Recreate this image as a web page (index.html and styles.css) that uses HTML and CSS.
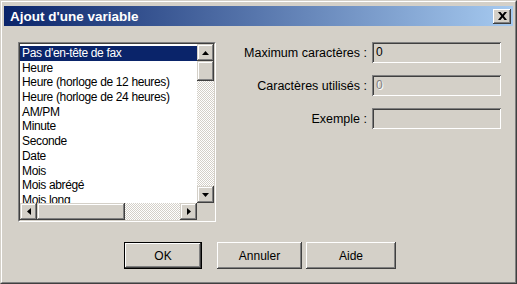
FILE: index.html
```html
<!DOCTYPE html>
<html lang="fr">
<head>
<meta charset="UTF-8">
<title>Ajout d'une variable</title>
<link rel="stylesheet" href="styles.css">
</head>
<body>

<div class="window">
  <div class="frame">

    <!-- Title bar -->
    <div class="titlebar">
      <span class="title">Ajout d'une variable</span>
      <button class="close-btn">
        <svg width="9" height="8" viewBox="0 0 9 8"><path d="M0 0h2.5L4.5 2.6 6.5 0H9L5.8 4 9 8H6.5L4.5 5.4 2.5 8H0l3.2-4z" fill="#000"/></svg>
      </button>
    </div>

    <div class="content">
      <div class="main">

        <!-- Variable list -->
        <div class="listbox">
          <div class="listbox-inner">
            <div class="list-row">
              <ul class="items">
                <li class="selected">Pas d'en-tête de fax</li>
                <li>Heure</li>
                <li>Heure (horloge de 12 heures)</li>
                <li>Heure (horloge de 24 heures)</li>
                <li>AM/PM</li>
                <li>Minute</li>
                <li>Seconde</li>
                <li>Date</li>
                <li>Mois</li>
                <li>Mois abrégé</li>
                <li>Mois long</li>
              </ul>
              <div class="vscroll">
                <div class="sb-btn"><svg width="7" height="4" viewBox="0 0 7 4"><path d="M3.5 0L7 4H0z"/></svg></div>
                <div class="sb-thumb-v"></div>
                <div class="sb-track"></div>
                <div class="sb-btn"><svg width="7" height="4" viewBox="0 0 7 4"><path d="M0 0h7L3.5 4z"/></svg></div>
              </div>
            </div>
            <div class="hscroll-row">
              <div class="hscroll">
                <div class="sb-btn"><svg width="4" height="7" viewBox="0 0 4 7"><path d="M0 3.5L4 0v7z"/></svg></div>
                <div class="sb-thumb-h"></div>
                <div class="sb-track"></div>
                <div class="sb-btn"><svg width="4" height="7" viewBox="0 0 4 7"><path d="M0 0l4 3.5L0 7z"/></svg></div>
              </div>
              <div class="corner"></div>
            </div>
          </div>
        </div>

        <!-- Fields -->
        <div class="fields">
          <label>Maximum caractères :</label>
          <div class="input">0</div>
          <label>Caractères utilisés :</label>
          <div class="input disabled">0</div>
          <label>Exemple :</label>
          <div class="input"></div>
        </div>
      </div>

      <!-- Dialog buttons -->
      <div class="buttons">
        <button class="btn btn-ok">OK</button>
        <button class="btn btn-cancel">Annuler</button>
        <button class="btn btn-help">Aide</button>
      </div>
    </div>

  </div>
</div>

</body>
</html>
```
FILE: styles.css
```css
body {
  margin: 0;
  background-color: #d4d0c8;
  font-family: "Liberation Sans", Arial, sans-serif;
  font-size: 12px;
}

/* Window frame */
.window {
  width: 517px;
  height: 284px;
  box-sizing: border-box;
  border: 1px solid;
  border-color: #d4d0c8 #404040 #404040 #d4d0c8;
}

.frame {
  height: 100%;
  box-sizing: border-box;
  border: 1px solid;
  border-color: #fff #808080 #808080 #fff;
  padding: 4px 2px 2px 2px;
  display: flex;
  flex-direction: column;
}

/* Title bar */
.titlebar {
  height: 20px;
  flex-shrink: 0;
  display: flex;
  align-items: center;
  justify-content: space-between;
  padding: 0 2px 0 6px;
  background: linear-gradient(to right, #0a246a, #a6caf0);
}

.title {
  color: #fff;
  font-weight: bold;
  font-size: 13.5px;
}

.close-btn {
  width: 18px;
  height: 15px;
  padding: 0;
  border: 0;
  background-color: #d4d0c8;
  display: flex;
  align-items: center;
  justify-content: center;
  box-shadow: inset -1px -1px #404040, inset 1px 1px #fff, inset -2px -2px #808080;
}

/* Content */
.content {
  flex: 1;
  display: flex;
  flex-direction: column;
  padding: 16px 12px 0 14px;
}

.main {
  display: flex;
  gap: 14px;
}

/* List box */
.listbox {
  width: 198px;
  height: 180px;
  box-sizing: border-box;
  border: 1px solid;
  border-color: #808080 #fff #fff #808080;
}

.listbox-inner {
  height: 100%;
  box-sizing: border-box;
  border: 1px solid;
  border-color: #404040 #d4d0c8 #d4d0c8 #404040;
  background-color: #fff;
  display: flex;
  flex-direction: column;
}

.list-row {
  flex: 1;
  display: flex;
  min-height: 0;
}

.items {
  flex: 1;
  margin: 0;
  padding: 2px 0 0 0;
  list-style: none;
  overflow: hidden;
  letter-spacing: -0.35px;
}

.items li {
  height: 14.7px;
  line-height: 14.7px;
  padding-left: 2px;
  white-space: nowrap;
}

.items li.selected {
  background-color: #0a246a;
  color: #fff;
}

/* Scroll bars */
.vscroll {
  width: 17px;
  display: flex;
  flex-direction: column;
}

.hscroll-row {
  height: 17px;
  flex-shrink: 0;
  display: flex;
}

.hscroll {
  flex: 1;
  display: flex;
}

.sb-btn {
  width: 17px;
  height: 17px;
  flex-shrink: 0;
  box-sizing: border-box;
  background-color: #d4d0c8;
  display: flex;
  align-items: center;
  justify-content: center;
  box-shadow: inset -1px -1px #404040, inset 1px 1px #d4d0c8, inset -2px -2px #808080, inset 2px 2px #fff;
}

.sb-btn svg {
  fill: #000;
}

.sb-track {
  flex: 1;
  background: repeating-conic-gradient(#fff 0 25%, #d4d0c8 0 50%) 0 0 / 2px 2px;
}

.sb-thumb-v,
.sb-thumb-h {
  flex-shrink: 0;
  background-color: #d4d0c8;
  box-shadow: inset -1px -1px #404040, inset 1px 1px #d4d0c8, inset -2px -2px #808080, inset 2px 2px #fff;
}

.sb-thumb-v {
  height: 20px;
}

.sb-thumb-h {
  width: 88px;
}

.corner {
  width: 17px;
  background-color: #d4d0c8;
}

/* Fields */
.fields {
  flex: 1;
  display: grid;
  grid-template-columns: 1fr 129px;
  column-gap: 5px;
  row-gap: 12px;
  align-content: start;
  align-items: center;
}

.fields label {
  text-align: right;
  font-size: 12.5px;
  color: #000;
}

.input {
  height: 21px;
  box-sizing: border-box;
  padding: 3px 0 0 4px;
  background-color: #d4d0c8;
  box-shadow: inset 1px 1px #808080, inset -1px -1px #fff, inset 2px 2px #404040, inset -2px -2px #d4d0c8;
}

.input.disabled {
  color: #808080;
  text-shadow: 1px 1px #fff;
}

/* Buttons */
.buttons {
  display: flex;
  margin-top: 20px;
  padding-left: 106px;
}

.btn {
  height: 27px;
  padding: 0;
  border: 0;
  font-family: inherit;
  font-size: 12px;
  color: #000;
  background-color: #d4d0c8;
  box-shadow: inset -1px -1px #404040, inset 1px 1px #fff, inset -2px -2px #808080;
}

.btn-ok {
  width: 78px;
  margin-right: 15px;
  border: 1px solid #000;
}

.btn-cancel {
  width: 85px;
  margin-right: 4px;
}

.btn-help {
  width: 90px;
}
```
